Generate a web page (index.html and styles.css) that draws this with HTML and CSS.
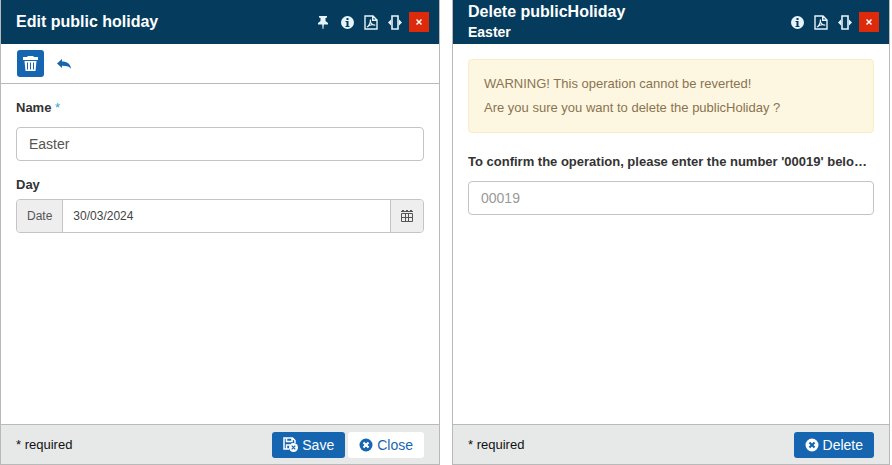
FILE: index.html
```html
<!DOCTYPE html>
<html lang="en">
<head>
    <meta charset="UTF-8">
    <meta name="viewport" content="width=device-width, initial-scale=1.0">
    <title>Edit public holiday</title>
    <link rel="stylesheet" href="styles.css">
</head>
<body>
    <!-- Shared icons -->
    <svg class="sprite" aria-hidden="true">
        <symbol id="icon-info" viewBox="0 0 13 13">
            <path fill-rule="evenodd" d="M6.500 0a6.500 6.500 0 1 1 0 13 6.500 6.500 0 0 1 0-13zM5.500 2v2h2V2zM4.500 5v1h1v4h-1v1h4v-1h-1V5z"/>
        </symbol>
        <symbol id="icon-pdf" viewBox="0 0 14 15">
            <path fill="none" stroke="currentColor" stroke-width="1.4" d="M1 1h8l4 4v9H1zM8.700 1v4.300H13"/>
            <path fill="none" stroke="currentColor" stroke-width="1.200" d="M3 12c1.500-.6 3.800-4.500 3.400-7.500C6 8 8 10 11.200 10.200 8.500 9 5.500 9.700 3 12z"/>
        </symbol>
        <symbol id="icon-width" viewBox="0 0 14 15">
            <path fill="none" stroke="currentColor" stroke-width="1.6" d="M4 1h6v13H4z"/>
            <path d="M3 4.500v6L0 7.500zM11 4.500v6l3-3z"/>
        </symbol>
        <symbol id="icon-times" viewBox="0 0 8 8">
            <path d="M1 2l1-1 2 2 2-2 1 1-2 2 2 2-1 1-2-2-2 2-1-1 2-2z"/>
        </symbol>
        <symbol id="icon-times-circle" viewBox="0 0 14 14">
            <path fill-rule="evenodd" d="M7 .5a6.500 6.500 0 1 1 0 13 6.500 6.500 0 0 1 0-13zM5.200 3.700L3.700 5.200 5.500 7 3.700 8.800l1.500 1.500L7 8.500l1.800 1.800 1.500-1.500L8.500 7l1.800-1.800-1.500-1.500L7 5.500z"/>
        </symbol>
    </svg>

    <div class="panels">
        <!-- Edit panel -->
        <form class="panel">
            <header class="panel-header">
                <h1 class="panel-title">Edit public holiday</h1>
                <div class="panel-tools">
                    <button type="button" class="tool-btn" aria-label="Pin">
                        <svg class="icon-pin" viewBox="0 0 10 13"><path d="M1 0h8v1.500L7.500 2v3L10 7v1.500H5.800L5.400 13h-.8l-.4-4.500H0V7l2.500-2V2L1 1.500z"/></svg>
                    </button>
                    <button type="button" class="tool-btn" aria-label="Information"><svg class="icon-info"><use href="#icon-info"/></svg></button>
                    <button type="button" class="tool-btn" aria-label="Export as PDF"><svg class="icon-pdf"><use href="#icon-pdf"/></svg></button>
                    <button type="button" class="tool-btn" aria-label="Change width"><svg class="icon-width"><use href="#icon-width"/></svg></button>
                    <button type="button" class="close-btn" aria-label="Close panel"><svg class="icon-times"><use href="#icon-times"/></svg></button>
                </div>
            </header>

            <div class="toolbar">
                <button type="button" class="bar-btn bar-btn-active" aria-label="Delete">
                    <svg class="icon-trash" viewBox="0 0 15 15"><path fill-rule="evenodd" d="M5 0h5l1 1h4v3H0V1h4zM1.500 5h12l-1 10h-10zM4 6.500v7h1v-7zM7 6.500v7h1v-7zM10 6.500v7h1v-7z"/></svg>
                </button>
                <button type="button" class="bar-btn" aria-label="Undo">
                    <svg class="icon-reply" viewBox="0 0 14 10"><path d="M5 0v2.500c5 0 8.500 2 9 7.500-1.300-2.400-4-3.400-9-3.300V9L0 4.500z"/></svg>
                </button>
            </div>

            <div class="panel-body">
                <div class="field">
                    <label class="field-label" for="name">Name <span class="required-mark">*</span></label>
                    <input class="text-input" type="text" id="name" value="Easter">
                </div>
                <div class="field">
                    <label class="field-label field-label-tight" for="day">Day</label>
                    <div class="input-group">
                        <label class="addon" for="day">Date</label>
                        <input class="date-input" type="text" id="day" value="30/03/2024">
                        <button type="button" class="addon addon-btn" aria-label="Open calendar">
                            <svg class="icon-calendar" viewBox="0 0 12 12">
                                <path d="M1 0h2v2H1zM5 0h2v2H5zM9 0h2v2H9z"/>
                                <path fill="none" stroke="currentColor" d="M.5 3.500h11v8H.5zM.5 7.500h11M4.500 3v8M7.500 3v8M0 1.500h12"/>
                            </svg>
                        </button>
                    </div>
                </div>
            </div>

            <footer class="panel-footer">
                <span class="footer-note">* required</span>
                <div class="footer-actions">
                    <button type="button" class="btn btn-primary">
                        <svg class="icon-save" viewBox="0 0 15 15">
                            <path fill="none" stroke="currentColor" stroke-width="1.500" d="M6 12H1V1h8.500L12 3.500V6M3.500 1v3.500H9V1M3.500 12V8H7"/>
                            <circle cx="10.500" cy="10.500" r="4.500"/>
                            <path class="save-cross" d="M8.700 8.700l3.600 3.600M12.300 8.700l-3.600 3.600"/>
                        </svg>Save
                    </button>
                    <button type="button" class="btn btn-plain"><svg class="icon-circle"><use href="#icon-times-circle"/></svg>Close</button>
                </div>
            </footer>
        </form>

        <!-- Delete panel -->
        <form class="panel">
            <header class="panel-header">
                <div>
                    <h1 class="panel-title">Delete publicHoliday</h1>
                    <h2 class="panel-subtitle">Easter</h2>
                </div>
                <div class="panel-tools">
                    <button type="button" class="tool-btn" aria-label="Information"><svg class="icon-info"><use href="#icon-info"/></svg></button>
                    <button type="button" class="tool-btn" aria-label="Export as PDF"><svg class="icon-pdf"><use href="#icon-pdf"/></svg></button>
                    <button type="button" class="tool-btn" aria-label="Change width"><svg class="icon-width"><use href="#icon-width"/></svg></button>
                    <button type="button" class="close-btn" aria-label="Close panel"><svg class="icon-times"><use href="#icon-times"/></svg></button>
                </div>
            </header>

            <div class="panel-body">
                <div class="alert">
                    <p>WARNING! This operation cannot be reverted!</p>
                    <p>Are you sure you want to delete the publicHoliday ?</p>
                </div>
                <div class="field">
                    <label class="field-label" for="confirm">To confirm the operation, please enter the number '00019' belo…</label>
                    <input class="text-input" type="text" id="confirm" placeholder="00019">
                </div>
            </div>

            <footer class="panel-footer">
                <span class="footer-note">* required</span>
                <div class="footer-actions">
                    <button type="button" class="btn btn-primary"><svg class="icon-circle"><use href="#icon-times-circle"/></svg>Delete</button>
                </div>
            </footer>
        </form>
    </div>
</body>
</html>
```
FILE: styles.css
```css
* {
    margin: 0;
    padding: 0;
    box-sizing: border-box;
}

body {
    font-family: "Liberation Sans", Arial, sans-serif;
    font-size: 13px;
    color: #333;
    background: #fff;
}

button,
input {
    font-family: inherit;
}

button {
    border: none;
    cursor: pointer;
}

svg {
    display: block;
    fill: currentColor;
}

.sprite {
    display: none;
}

/* Two panels side by side */
.panels {
    display: grid;
    grid-template-columns: 440fr 438fr;
    gap: 12px;
    min-height: 100vh;
    padding-right: 2px;
}

.panel {
    display: flex;
    flex-direction: column;
    min-width: 0;
    border: 1px solid #b9b9b9;
    border-top: none;
}

/* Header */
.panel-header {
    display: flex;
    align-items: center;
    justify-content: space-between;
    height: 44px;
    padding: 0 10px 0 15px;
    background: #053c5d;
    color: #fff;
}

.panel-title {
    font-size: 16px;
    line-height: 20px;
}

.panel-subtitle {
    font-size: 14px;
    line-height: 20px;
}

.panel-tools {
    display: flex;
    align-items: center;
}

.tool-btn {
    display: flex;
    align-items: center;
    justify-content: center;
    width: 24px;
    height: 20px;
    background: none;
    color: #e6f4fb;
}

.close-btn {
    display: flex;
    align-items: center;
    justify-content: center;
    width: 20px;
    height: 20px;
    margin-left: 2px;
    background: #dc2a0b;
    color: #fff;
}

/* Toolbar */
.toolbar {
    display: flex;
    align-items: center;
    gap: 6px;
    height: 40px;
    padding: 0 16px;
    border-bottom: 1px solid #b9b9b9;
}

.bar-btn {
    display: flex;
    align-items: center;
    justify-content: center;
    width: 27px;
    height: 27px;
    border-radius: 3px;
    background: none;
    color: #1565b0;
}

.bar-btn-active {
    background: #1565b0;
    color: #fff;
}

/* Body */
.panel-body {
    flex: 1;
    padding: 15px;
}

.field {
    margin-bottom: 15px;
}

.field-label {
    display: block;
    margin-bottom: 11px;
    font-weight: bold;
    line-height: 17px;
    white-space: nowrap;
    overflow: hidden;
    text-overflow: ellipsis;
}

.field-label-tight {
    margin-bottom: 6px;
}

.required-mark {
    color: #2fa4c8;
    font-weight: normal;
}

.text-input {
    display: block;
    width: 100%;
    height: 34px;
    padding: 0 12px;
    border: 1px solid #c4c4c4;
    border-radius: 4px;
    background: #fff;
    color: #555;
    font-size: 14px;
}

.text-input::placeholder {
    color: #999;
}

.input-group {
    display: flex;
    height: 34px;
    border: 1px solid #c4c4c4;
    border-radius: 4px;
    overflow: hidden;
}

.addon {
    display: flex;
    align-items: center;
    padding: 0 10px;
    background: #eee;
    color: #555;
    font-size: 12px;
}

.date-input {
    flex: 1;
    min-width: 0;
    padding: 0 10px;
    border: solid #c4c4c4;
    border-width: 0 1px;
    color: #444;
    font-size: 12px;
}

.alert {
    margin-bottom: 20px;
    padding: 12px 15px;
    border: 1px solid #faebcc;
    border-radius: 4px;
    background: #fdf7e2;
    color: #8a7350;
    line-height: 24px;
}

/* Footer */
.panel-footer {
    display: flex;
    align-items: center;
    justify-content: space-between;
    height: 40px;
    padding: 0 15px;
    border-top: 1px solid #b9b9b9;
    background: #e7e9e9;
    color: #111;
}

.footer-actions {
    display: flex;
    gap: 3px;
}

.btn {
    display: flex;
    align-items: center;
    gap: 4px;
    height: 26px;
    padding: 0 11px;
    border-radius: 3px;
    font-size: 14px;
}

.btn-primary {
    background: #1565b0;
    color: #fff;
}

.btn-plain {
    background: #fff;
    color: #1565b0;
}

/* Icon sizes */
.icon-pin {
    width: 10px;
    height: 13px;
}

.icon-info {
    width: 13px;
    height: 13px;
}

.icon-pdf {
    width: 14px;
    height: 15px;
}

.icon-width {
    width: 14px;
    height: 15px;
}

.icon-times {
    width: 8px;
    height: 8px;
}

.icon-trash {
    width: 15px;
    height: 15px;
}

.icon-reply {
    width: 14px;
    height: 10px;
}

.icon-calendar {
    width: 12px;
    height: 12px;
}

.icon-save {
    width: 15px;
    height: 15px;
}

.save-cross {
    stroke: #1565b0;
    stroke-width: 1.2;
}

.icon-circle {
    width: 14px;
    height: 14px;
}
```
